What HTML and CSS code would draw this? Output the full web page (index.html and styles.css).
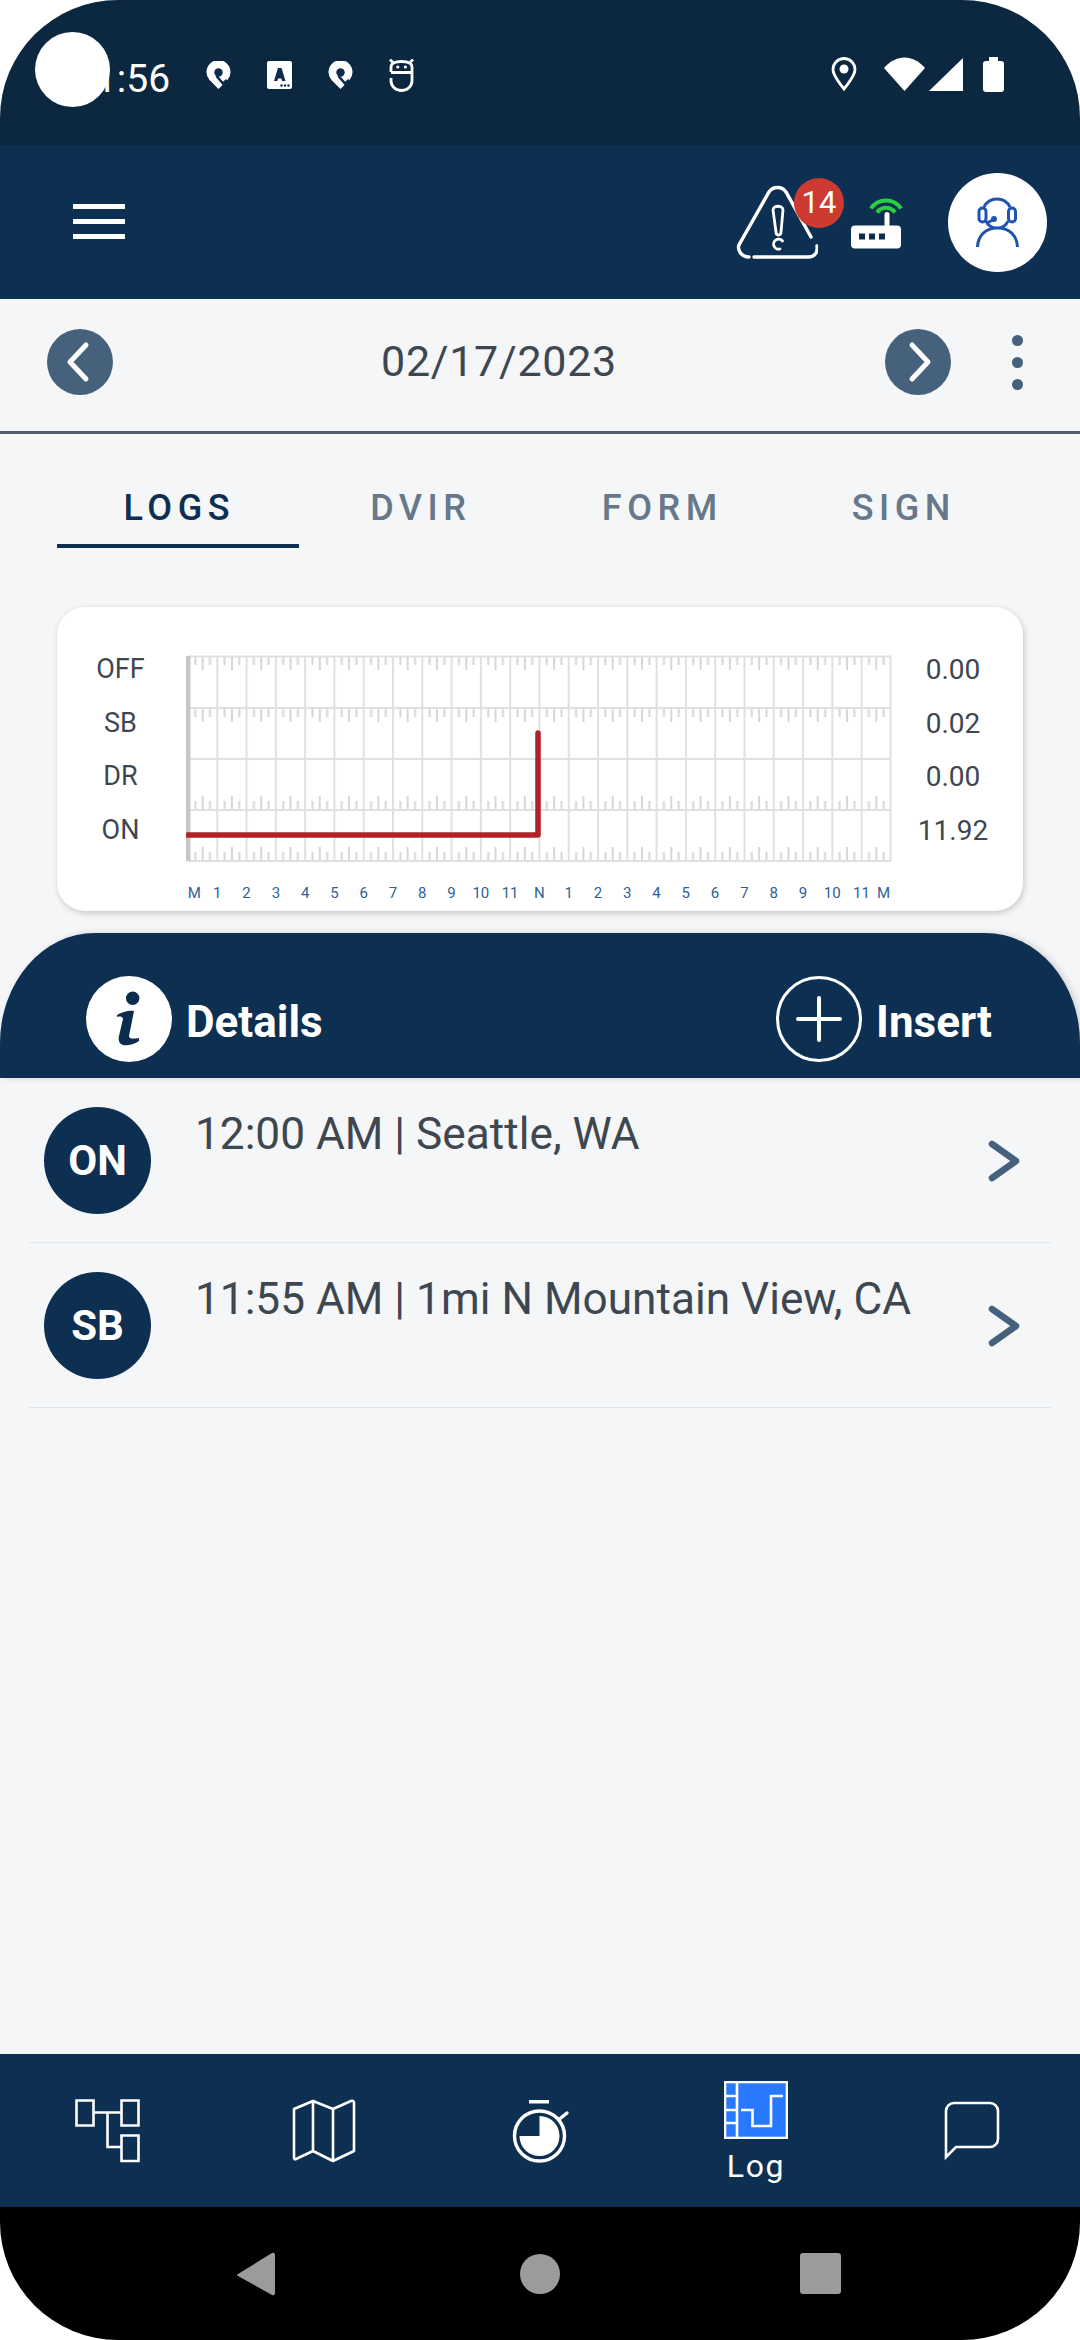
FILE: index.html
```html
<!DOCTYPE html>
<html lang="en">
<head>
<meta charset="utf-8">
<title>Logs</title>
<link rel="stylesheet" href="styles.css">
</head>
<body>
<div class="screen">
  <div class="statusbar">
    <span class="clock">11:56</span>
    <div class="notif-icons">
      <svg class="ic-pin" viewBox="0 0 25 28"><path class="w" d="M12.5 28 L3.5 19 A12 12 0 1 1 21.5 19 Z"/><circle class="d" cx="12.5" cy="11.5" r="4.2"/><path class="dl" d="M10.5 15 L17 22.5 L21 19"/></svg>
      <svg class="ic-pin" viewBox="0 0 25 28"><rect class="w" width="25" height="28" rx="2"/><path class="d" d="M7 20 L11 7 H14.5 L18.5 20 H15 L14.3 17.5 H11 L10.3 20 Z"/><circle class="d" cx="14.5" cy="24.5" r="1.2"/><circle class="d" cx="18" cy="24.5" r="1.2"/><circle class="d" cx="21.5" cy="24.5" r="1.2"/></svg>
      <svg class="ic-pin" viewBox="0 0 25 28"><path class="w" d="M12.5 28 L3.5 19 A12 12 0 1 1 21.5 19 Z"/><circle class="d" cx="12.5" cy="11.5" r="4.2"/><path class="dl" d="M10.5 15 L17 22.5 L21 19"/></svg>
      <svg class="ic-droid" viewBox="0 0 25 33"><path class="ln" d="M2 13 V8 Q2 2.5 12.5 2.5 Q23 2.5 23 8 V13.5 H2 M23 13.5 V22 A10.5 9.5 0 0 1 2 22 V19 M1 0.5 L4.5 4 M24 0.5 L20.5 4"/><circle class="w" cx="8.8" cy="8" r="1.6"/><circle class="w" cx="16.4" cy="8" r="1.6"/></svg>
    </div>
    <div class="sys-icons">
      <svg class="ic-loc" viewBox="0 0 26 34"><path class="ln" d="M13 32 C8 25 2 19 2 12.5 A11 11 0 0 1 24 12.5 C24 19 18 25 13 32 Z"/><circle class="w" cx="13" cy="12" r="4.5"/></svg>
      <svg class="ic-wifi" viewBox="0 0 41 34"><path class="w" d="M0 11 C12 -3 29 -3 41 11 L20.5 34 Z"/></svg>
      <svg class="ic-signal" viewBox="0 0 34 33"><path class="w" d="M0 33 L34 0 V33 Z"/></svg>
      <svg class="ic-batt" viewBox="0 0 21 35"><rect class="w" y="4" width="21" height="31" rx="3"/><rect class="w" x="6" width="9" height="6"/></svg>
    </div>
    <div class="camera"></div>
  </div>

  <header class="appbar">
    <div class="burger"><i></i><i></i><i></i></div>
    <div class="appbar-right">
      <div class="alert">
        <svg class="ic-warn" viewBox="0 0 82 74"><path class="ln3" d="M13 72 C5 72 0 64 4 58 L33 7 C37 1 46 1 50 7 L75 52 M18 72 H72 C79 72 82 67 81 61"/><path class="ln2" d="M37 25 C37 20 47 20 47 25 L45 47 C45 51 40 51 40 47 Z M46.5 56 A5 5 0 1 0 44 64"/></svg>
        <span class="badge">14</span>
      </div>
      <svg class="ic-router" viewBox="0 0 50 50"><rect class="w" y="28" width="50" height="23" rx="4"/><rect class="d" x="8" y="36" width="6" height="6"/><rect class="d" x="18" y="36" width="6" height="6"/><rect class="d" x="28" y="36" width="6" height="6"/><path class="ant" d="M36 29 V17"/><path class="grn" d="M21 11 A18 18 0 0 1 51 11 M27 15 A11 11 0 0 1 45 15" transform="translate(-1 0)"/></svg>
      <div class="avatar">
        <svg viewBox="0 0 99 99"><path class="hs" d="M36 34 A14.5 14.5 0 0 1 62 34 M38 48 C40 53 45 55 49 55 C53 55 58 53 60 48 M29.5 74 C30 63 37 55 49.5 55 C62 55 69 63 69.5 74 M38 50 C40 50 43 48 46 46"/><rect class="hs" x="31" y="35" width="7" height="14" rx="3.5"/><rect class="hs" x="60.5" y="35" width="7" height="14" rx="3.5"/><circle class="hsf" cx="46" cy="46" r="3"/></svg>
      </div>
    </div>
  </header>

  <div class="datebar">
    <svg class="nav-dot" viewBox="0 0 66 66"><circle class="slate" cx="33" cy="33" r="33"/><path class="chev" d="M39 16 L23 33 L39 50"/></svg>
    <span class="date">02/17/2023</span>
    <svg class="nav-dot" viewBox="0 0 66 66"><circle class="slate" cx="33" cy="33" r="33"/><path class="chev" d="M27 16 L43 33 L27 50"/></svg>
    <div class="kebab"><i></i><i></i><i></i></div>
  </div>

  <nav class="tabs">
    <span class="tab active">LOGS</span>
    <span class="tab">DVIR</span>
    <span class="tab">FORM</span>
    <span class="tab">SIGN</span>
  </nav>

  <section class="card">
    <div class="status-col">
      <span>OFF</span><span>SB</span><span>DR</span><span>ON</span>
    </div>
    <div class="chart-col">
      <svg class="chart" viewBox="0 0 707 207">
        <defs>
          <pattern id="down" width="29.29" height="14" patternUnits="userSpaceOnUse">
            <path class="tick" d="M7.3 0 V9 M14.65 0 V14 M22 0 V9"/>
          </pattern>
          <pattern id="up" width="29.29" height="14" patternUnits="userSpaceOnUse">
            <path class="tick" d="M7.3 14 V5 M14.65 14 V0 M22 14 V5"/>
          </pattern>
          <pattern id="hours" width="29.29" height="207" patternUnits="userSpaceOnUse">
            <path class="grid" d="M2 0 V207"/>
          </pattern>
        </defs>
        <rect fill="url(#hours)" x="0" y="1" width="704" height="205"/>
        <rect fill="url(#down)" width="703" height="14" transform="translate(2 1)"/>
        <rect fill="url(#down)" width="703" height="14" transform="translate(2 53)"/>
        <rect fill="url(#up)" width="703" height="14" transform="translate(2 141)"/>
        <rect fill="url(#up)" width="703" height="14" transform="translate(2 192)"/>
        <path class="grid" d="M2 1.5 H705 M2 53 H705 M2 104 H705 M2 155 H705 M2 206 H705 M704.5 1 V206"/>
        <path class="edge" d="M2 1 V206"/>
        <path class="trace" d="M1.5 180 H352 V78"/>
      </svg>
      <div class="axis">
        <span class="end-l">M</span><span>1</span><span>2</span><span>3</span><span>4</span><span>5</span><span>6</span><span>7</span><span>8</span><span>9</span><span>10</span><span>11</span><span>N</span><span>1</span><span>2</span><span>3</span><span>4</span><span>5</span><span>6</span><span>7</span><span>8</span><span>9</span><span>10</span><span>11</span><span class="end-r">M</span>
      </div>
    </div>
    <div class="total-col">
      <span>0.00</span><span>0.02</span><span>0.00</span><span>11.92</span>
    </div>
  </section>

  <div class="actions">
    <div class="action">
      <svg class="act-ic" viewBox="0 0 86 86"><circle class="w" cx="43" cy="43" r="43"/><circle class="d" cx="46.7" cy="22.3" r="6.7"/><path class="d" d="M31 39 C36 36 43 34 48 35 L43 60 C43 63 47 63 53 62 L53 65 C47 69 41 70 37 69 C33 68 32 64 33 60 L37 43 C37 41 34 40 31 41 Z"/></svg>
      <span class="act-label">Details</span>
    </div>
    <div class="action">
      <svg class="act-ic" viewBox="0 0 86 86"><circle class="ring" cx="43" cy="43" r="41.5"/><path class="plus" d="M43 22 V64 M22 43 H64"/></svg>
      <span class="act-label">Insert</span>
    </div>
  </div>

  <main class="events">
    <div class="event">
      <span class="pill">ON</span>
      <span class="event-text">12:00 AM | Seattle, WA</span>
      <svg class="event-chev" viewBox="0 0 32 42"><path d="M4 4 L28 21 L4 38"/></svg>
    </div>
    <div class="event">
      <span class="pill">SB</span>
      <span class="event-text">11:55 AM | 1mi N Mountain View, CA</span>
      <svg class="event-chev" viewBox="0 0 32 42"><path d="M4 4 L28 21 L4 38"/></svg>
    </div>
  </main>

  <nav class="bottomnav">
    <div class="nav-item">
      <svg class="ic-tree" viewBox="0 0 66 64"><path class="ln25" d="M1.5 1.5 H18.5 V26.5 H1.5 Z M46.5 1.5 H63.5 V26.5 H46.5 Z M46.5 36.5 H63.5 V62 H46.5 Z M18.5 13.5 H46.5 M32.5 13.5 V48 H46.5"/></svg>
    </div>
    <div class="nav-item">
      <svg class="ic-map" viewBox="0 0 66 64"><path class="ln25r" d="M3 10 L22 2 L42 10 L60 2 Q63 1 63 4 V52 L42 62 L22 52 L5 60 Q3 61 3 58 Z M22 2 V52 M42 10 V62"/></svg>
    </div>
    <div class="nav-item">
      <svg class="ic-timer" viewBox="0 0 60 66"><rect class="w" x="19" y="2" width="20" height="3.5"/><circle class="ln35" cx="29.5" cy="38" r="25"/><path class="ln3" d="M49.5 21 L57 15"/><path class="w" d="M29.5 18 A20 20 0 1 1 9.5 38 H29.5 Z"/></svg>
    </div>
    <div class="nav-item current">
      <svg class="ic-log" viewBox="0 0 64 58"><rect class="blue" x="1" y="1" width="62" height="56"/><path class="ln25" d="M13 1 V57 M1 15 H13 M1 29 H13 M1 42 H13 M17 29 H28.5 V45 H47 V15 H59"/></svg>
      <span class="nav-label">Log</span>
    </div>
    <div class="nav-item">
      <svg class="ic-chat" viewBox="0 0 56 60"><path class="ln25" d="M2 56 V10 A8 8 0 0 1 10 2 H46 A8 8 0 0 1 54 10 V38 A8 8 0 0 1 46 46 H12 Z"/></svg>
    </div>
  </nav>

  <div class="sysnav">
    <svg class="sys-back" viewBox="0 0 39 44"><path d="M2 22 L36 1 Q39 0 39 3 V41 Q39 44 36 43 L2 24 Q0 23 2 22 Z"/></svg>
    <span class="sys-home"></span>
    <span class="sys-recent"></span>
  </div>
</div>
</body>
</html>
```
FILE: styles.css
```css
* { box-sizing: border-box; }
html, body { margin: 0; padding: 0; background: #fff; }
body { font-family: Roboto, "Noto Sans", sans-serif; }
svg { display: block; flex: none; }

.w { fill: #fff; }
.d { fill: #0c2c4d; }
.dl { fill: none; stroke: #0c2c4d; stroke-width: 2.6; }
.ln { fill: none; stroke: #fff; stroke-width: 2.8; }
.ln2 { fill: none; stroke: #fff; stroke-width: 2.8; stroke-linecap: round; stroke-linejoin: round; }
.ln25 { fill: none; stroke: #fff; stroke-width: 2.6; }
.ln25r { fill: none; stroke: #fff; stroke-width: 2.6; stroke-linejoin: round; }
.ln3 { fill: none; stroke: #fff; stroke-width: 3.4; stroke-linecap: round; }
.ln35 { fill: none; stroke: #fff; stroke-width: 3.4; }

.screen {
  position: relative;
  width: 1080px;
  height: 2340px;
  border-radius: 118px;
  overflow: hidden;
  background: #f4f6f8;
  display: flex;
  flex-direction: column;
}

/* status bar */
.statusbar {
  position: relative;
  flex: none;
  height: 145px;
  background: #0c2841;
  display: flex;
  align-items: flex-start;
  padding: 56px 76px 0 73px;
  color: #fff;
}
.clock { font-size: 39px; line-height: 46px; width: 95px; }
.notif-icons { display: flex; align-items: center; gap: 36px; margin-left: 38px; height: 38px; }
.ic-pin { width: 25px; height: 28px; }
.ic-droid { width: 25px; height: 33px; }
.sys-icons { margin-left: auto; display: flex; align-items: center; height: 36px; }
.ic-loc { width: 26px; height: 34px; }
.ic-wifi { width: 41px; height: 34px; margin-left: 27px; }
.ic-signal { width: 34px; height: 33px; margin-left: 4px; }
.ic-batt { width: 21px; height: 35px; margin-left: 20px; }
.camera {
  position: absolute;
  left: 35px;
  top: 32px;
  width: 75px;
  height: 75px;
  border-radius: 50%;
  background: #fff;
}

/* app bar */
.appbar {
  flex: none;
  height: 154px;
  background: #0d2f52;
  display: flex;
  align-items: center;
  padding: 0 33px 0 73px;
}
.burger { display: flex; flex-direction: column; gap: 9.5px; width: 52px; margin-top: -1px; }
.burger i { display: block; height: 5.5px; background: #fff; }
.appbar-right { margin-left: auto; display: flex; align-items: center; }
.alert { position: relative; width: 82px; height: 74px; }
.ic-warn { width: 82px; height: 74px; }
.badge {
  position: absolute;
  left: 58px;
  top: -7px;
  width: 50px;
  height: 50px;
  border-radius: 50%;
  background: #cc3a32;
  color: #fff;
  font-size: 31px;
  line-height: 50px;
  text-align: center;
}
.ic-router { width: 50px; height: 51px; margin-left: 33px; overflow: visible; }
.ant { fill: none; stroke: #fff; stroke-width: 5; stroke-linecap: round; }
.grn { fill: none; stroke: #2ecc40; stroke-width: 4; }
.avatar { width: 99px; height: 99px; border-radius: 50%; background: #fff; margin-left: 47px; }
.avatar svg { width: 99px; height: 99px; }
.hs { fill: none; stroke: #1f55b0; stroke-width: 3; }
.hsf { fill: #1f55b0; }

/* date bar */
.datebar {
  flex: none;
  height: 135px;
  border-bottom: 3px solid #545f6c;
  display: flex;
  align-items: center;
  padding: 0 0 6px 47px;
}
.nav-dot { width: 66px; height: 66px; }
.slate { fill: #46617c; }
.chev { fill: none; stroke: #fff; stroke-width: 5; stroke-linecap: round; stroke-linejoin: round; }
.date {
  width: 772px;
  text-align: center;
  font-size: 43px;
  letter-spacing: 0.7px;
  color: #3e4750;
  margin-top: -3px;
}
.kebab { display: flex; flex-direction: column; gap: 11px; margin-left: 61px; }
.kebab i { display: block; width: 11px; height: 11px; border-radius: 50%; background: #46617c; }

/* tabs */
.tabs { flex: none; display: flex; padding: 50px 57px 0; }
.tab {
  flex: 1;
  height: 64px;
  text-align: center;
  font-size: 36px;
  font-weight: 500;
  line-height: 48px;
  letter-spacing: 5.5px;
  text-indent: 3px;
  color: #66788a;
  border-bottom: 4px solid transparent;
}
.tab.active { color: #0d2f52; border-bottom-color: #0d2f52; }

/* chart card */
.card {
  flex: none;
  height: 304px;
  margin: 59px 57px 0;
  padding-top: 36px;
  background: #fff;
  border-radius: 28px;
  box-shadow: 1px 2px 6px rgba(0, 0, 0, 0.2);
  display: flex;
  align-items: flex-start;
}
.status-col, .total-col {
  display: flex;
  flex-direction: column;
  text-align: center;
  color: #3e4750;
}
.status-col { width: 129px; padding-right: 2px; font-size: 27px; }
.total-col { width: 132px; padding-right: 8px; font-size: 28px; }
.status-col span, .total-col span { height: 53.7px; line-height: 53.7px; }
.chart-col { width: 705px; padding-top: 12px; }
.chart { width: 707px; height: 207px; }
.grid { fill: none; stroke: #e0e0e0; stroke-width: 2; }
.tick { fill: none; stroke: #d6d6d6; stroke-width: 2; }
.edge { fill: none; stroke: #c8c8c8; stroke-width: 5; }
.trace { fill: none; stroke: #b02227; stroke-width: 5.5; stroke-linecap: round; stroke-linejoin: round; }
.axis {
  display: flex;
  margin-top: 22px;
  font-size: 15px;
  line-height: 18px;
  color: #2f5f95;
  text-align: center;
}
.axis span { flex: none; width: 29.29px; }
.axis .end-l { width: 16.65px; }
.axis .end-r { width: 15px; }

/* actions */
.actions {
  flex: none;
  height: 145px;
  margin-top: 22px;
  background: #0d2f52;
  border-radius: 95px 95px 0 0 / 110px 110px 0 0;
  box-shadow: 3px 0 7px rgba(0, 0, 0, 0.14);
  display: flex;
  justify-content: space-between;
  padding: 43px 88px 0 86px;
  position: relative;
}
.action { display: flex; align-items: center; gap: 14px; height: 86px; }
.act-ic { width: 86px; height: 86px; }
.ring { fill: none; stroke: #fff; stroke-width: 3; }
.plus { fill: none; stroke: #fff; stroke-width: 4; stroke-linecap: round; }
.act-label { font-size: 44px; font-weight: 700; color: #fff; line-height: 52px; margin-top: 5px; }

/* events */
.events { flex: 1; padding: 0 29px; }
.event {
  height: 165px;
  border-bottom: 1.5px solid #e1e4e8;
  display: flex;
  align-items: center;
  padding: 1px 31px 0 15px;
}
.pill {
  flex: none;
  width: 107px;
  height: 107px;
  border-radius: 50%;
  background: #0d2f52;
  color: #fff;
  font-size: 42px;
  font-weight: 700;
  line-height: 107px;
  text-align: center;
}
.event-text {
  flex: 1;
  align-self: flex-start;
  margin: 29px 0 0 44px;
  font-size: 44.2px;
  line-height: 52px;
  color: #3e4750;
}
.event-chev { width: 32px; height: 42px; }
.event-chev path { fill: none; stroke: #46617c; stroke-width: 6.5; stroke-linecap: round; stroke-linejoin: round; }

/* bottom nav */
.bottomnav {
  flex: none;
  height: 153px;
  background: #0d2f52;
  display: grid;
  grid-template-columns: repeat(5, 216px);
}
.nav-item { display: flex; flex-direction: column; align-items: center; justify-content: center; }
.ic-tree { width: 66px; height: 64px; }
.ic-map { width: 66px; height: 64px; }
.ic-timer { width: 60px; height: 66px; }
.ic-log { width: 64px; height: 58px; }
.ic-chat { width: 56px; height: 60px; }
.blue { fill: #2979ff; stroke: #fff; stroke-width: 2.6; }
.nav-label { font-size: 32px; line-height: 38px; letter-spacing: 1.6px; color: #fff; margin-top: 8px; }
.current { padding-top: 4px; }

/* system nav */
.sysnav {
  flex: none;
  height: 133px;
  background: #000;
  display: flex;
  align-items: center;
  padding-left: 236px;
}
.sys-back { width: 39px; height: 44px; }
.sys-back path { fill: #9b9b9b; }
.sys-home { width: 40px; height: 40px; border-radius: 50%; background: #9b9b9b; margin-left: 245px; }
.sys-recent { width: 41px; height: 41px; border-radius: 3px; background: #9b9b9b; margin-left: 240px; }
```
